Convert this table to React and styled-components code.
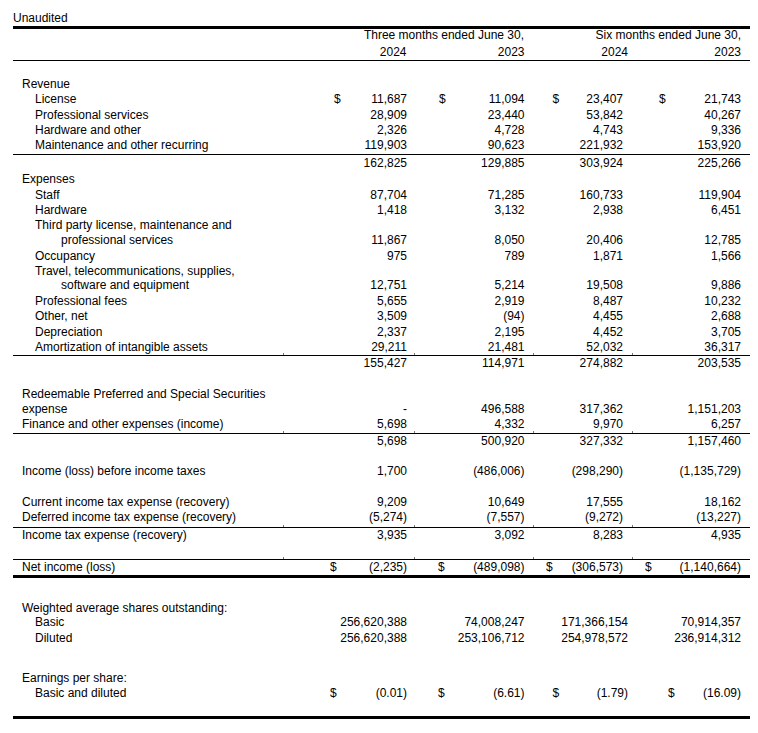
import React from 'react';
import styled, { createGlobalStyle } from 'styled-components';

const GlobalStyle = createGlobalStyle`
  *, *::before, *::after {
    box-sizing: border-box;
  }
  html, body {
    margin: 0;
    background: #fff;
  }
  body {
    font-family: "Liberation Sans", Arial, sans-serif;
    font-size: 12px;
    color: #000;
  }
`;

const Page = styled.div`
  width: 750px;
  padding-left: 13px;
  line-height: 10px;
`;

const Caption = styled.div`
  height: 26px;
  padding-top: 13px;
`;

const Table = styled.div`
  border-top: 3px solid #000;
`;

const RULES = {
  thin: '1px solid #000',
  thick: '3px solid #000',
};

// h is the full height of the row, rule included; pt puts the baseline in place
const Row = styled.div`
  display: grid;
  grid-template-columns: 270px 131px 119px 99px 118px;
  height: ${(p) => p.$h}px;
  padding-top: ${(p) => p.$pt || 0}px;
  border-bottom: ${(p) => (p.$rule ? RULES[p.$rule] : 'none')};
`;

const INDENT = [9, 22, 48];

const Label = styled.div`
  padding-left: ${(p) => INDENT[p.$level || 0]}px;
  white-space: nowrap;
`;

const Heading = styled.div`
  grid-column: span 2;
  text-align: right;
  padding-right: ${(p) => p.$pr}px;
  white-space: nowrap;
`;

const Amount = styled.div`
  position: relative;
  display: flex;
  justify-content: ${(p) => (p.$dollar != null ? 'space-between' : 'flex-end')};
  padding-left: ${(p) => p.$dollar || 0}px;
  padding-right: ${(p) => p.$pr}px;
  white-space: nowrap;

  &::after {
    content: '';
    display: ${(p) => (p.$tick ? 'block' : 'none')};
    position: absolute;
    left: 0;
    bottom: 0;
    width: 1px;
    height: 2px;
    background: #777;
  }
`;

const STD_DOLLARS = [51, 25, 19.5, 27];
const STD_PADS = [7, 8.5, 9, 9];
const WIDE_PADS = [7, 8.5, 4, 9];

const rows = [
  { h: 15 },
  { label: 'Revenue', level: 0, h: 15, pt: 3 },
  { label: 'License', level: 1, h: 16, pt: 3, v: ['11,687', '11,094', '23,407', '21,743'], dollars: STD_DOLLARS },
  { label: 'Professional services', level: 1, h: 15, pt: 3, v: ['28,909', '23,440', '53,842', '40,267'] },
  { label: 'Hardware and other', level: 1, h: 15, pt: 3, v: ['2,326', '4,728', '4,743', '9,336'] },
  { label: 'Maintenance and other recurring', level: 1, h: 18, pt: 3, v: ['119,903', '90,623', '221,932', '153,920'], rule: 'thin' },
  { h: 16, pt: 3, v: ['162,825', '129,885', '303,924', '225,266'] },
  { label: 'Expenses', level: 0, h: 16, pt: 3 },
  { label: 'Staff', level: 1, h: 15, pt: 3, v: ['87,704', '71,285', '160,733', '119,904'] },
  { label: 'Hardware', level: 1, h: 15, pt: 3, v: ['1,418', '3,132', '2,938', '6,451'] },
  { label: 'Third party license, maintenance and', level: 1, h: 15, pt: 3 },
  { label: 'professional services', level: 2, h: 16, pt: 3, v: ['11,867', '8,050', '20,406', '12,785'] },
  { label: 'Occupancy', level: 1, h: 15, pt: 3, v: ['975', '789', '1,871', '1,566'] },
  { label: 'Travel, telecommunications, supplies,', level: 1, h: 14, pt: 3 },
  { label: 'software and equipment', level: 2, h: 16, pt: 3, v: ['12,751', '5,214', '19,508', '9,886'] },
  { label: 'Professional fees', level: 1, h: 15, pt: 3, v: ['5,655', '2,919', '8,487', '10,232'] },
  { label: 'Other, net', level: 1, h: 16, pt: 3, v: ['3,509', '(94)', '4,455', '2,688'] },
  { label: 'Depreciation', level: 1, h: 15, pt: 3, v: ['2,337', '2,195', '4,452', '3,705'] },
  { label: 'Amortization of intangible assets', level: 1, h: 17, pt: 3, v: ['29,211', '21,481', '52,032', '36,317'], rule: 'thin', ticks: true },
  { h: 15, pt: 2, v: ['155,427', '114,971', '274,882', '203,535'] },
  { h: 15 },
  { label: 'Redeemable Preferred and Special Securities', level: 0, h: 15, pt: 3 },
  { label: 'expense', level: 0, h: 15, pt: 3, v: ['-', '496,588', '317,362', '1,151,203'] },
  { label: 'Finance and other expenses (income)', level: 0, h: 18, pt: 3, v: ['5,698', '4,332', '9,970', '6,257'], rule: 'thin', ticks: true },
  { h: 15, pt: 2, v: ['5,698', '500,920', '327,332', '1,157,460'] },
  { h: 14 },
  { label: 'Income (loss) before income taxes', level: 0, h: 15, pt: 3, v: ['1,700', '(486,006)', '(298,290)', '(1,135,729)'] },
  { h: 16 },
  { label: 'Current income tax expense (recovery)', level: 0, h: 15, pt: 3, v: ['9,209', '10,649', '17,555', '18,162'] },
  { label: 'Deferred income tax expense (recovery)', level: 0, h: 19, pt: 3, v: ['(5,274)', '(7,557)', '(9,272)', '(13,227)'], rule: 'thin', ticks: true },
  { label: 'Income tax expense (recovery)', level: 0, h: 15, pt: 2, v: ['3,935', '3,092', '8,283', '4,935'] },
  { h: 17, rule: 'thin', ticks: true },
  { label: 'Net income (loss)', level: 0, h: 18, pt: 2, v: ['(2,235)', '(489,098)', '(306,573)', '(1,140,664)'], dollars: [47, 24, 13, 13], rule: 'thick' },
  { h: 22 },
  { label: 'Weighted average shares outstanding:', level: 0, h: 15, pt: 3 },
  { label: 'Basic', level: 1, h: 16, pt: 2, v: ['256,620,388', '74,008,247', '171,366,154', '70,914,357'], pads: WIDE_PADS },
  { label: 'Diluted', level: 1, h: 15, pt: 2, v: ['256,620,388', '253,106,712', '254,978,572', '236,914,312'], pads: WIDE_PADS },
  { h: 24 },
  { label: 'Earnings per share:', level: 0, h: 15, pt: 3 },
  { label: 'Basic and diluted', level: 1, h: 15, pt: 3, v: ['(0.01)', '(6.61)', '(1.79)', '(16.09)'], dollars: [47, 24, 19.5, 36], pads: WIDE_PADS },
  { h: 19, rule: 'thick' },
];

function StatementRow({ row }) {
  const pads = row.pads || STD_PADS;
  return (
    <Row $h={row.h} $pt={row.pt} $rule={row.rule}>
      <Label $level={row.level}>{row.label}</Label>
      {[0, 1, 2, 3].map((i) => {
        const dollar = row.dollars ? row.dollars[i] : null;
        return (
          <Amount key={i} $dollar={dollar} $pr={pads[i]} $tick={row.ticks}>
            {dollar != null && <span>$</span>}
            {row.v && <span>{row.v[i]}</span>}
          </Amount>
        );
      })}
    </Row>
  );
}

export default function App() {
  return (
    <>
      <GlobalStyle />
      <Page>
        <Caption>Unaudited</Caption>
        <Table>
          <Row $h={15} $pt={1}>
            <Label />
            <Heading $pr={9}>Three months ended June 30,</Heading>
            <Heading $pr={9}>Six months ended June 30,</Heading>
          </Row>
          <Row $h={17} $pt={3} $rule="thin">
            <Label />
            <Amount $pr={7.5}>2024</Amount>
            <Amount $pr={8.5}>2023</Amount>
            <Amount $pr={4}>2024</Amount>
            <Amount $pr={9}>2023</Amount>
          </Row>
          {rows.map((row, i) => (
            <StatementRow key={i} row={row} />
          ))}
        </Table>
      </Page>
    </>
  );
}
